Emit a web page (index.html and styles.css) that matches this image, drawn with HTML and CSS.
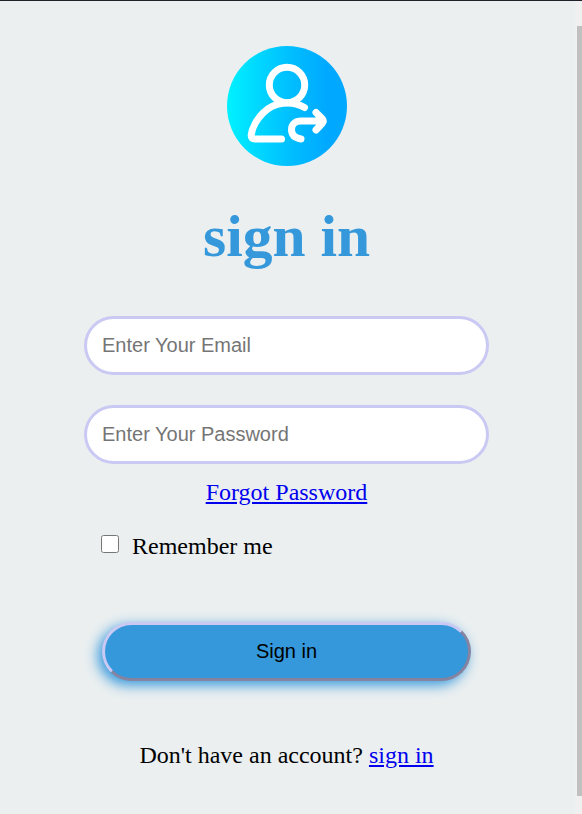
FILE: index.html
```
<!DOCTYPE html>
<html lang="en">
<head>
<meta charset="utf-8">
<title>sign in</title>
<link rel="stylesheet" href="styles.css">
</head>
<body>
<div class="window">
<main class="page">
<svg class="avatar" viewBox="0 0 120 120" aria-hidden="true">
<defs><linearGradient id="sky"><stop offset="0" stop-color="#00f2ff"/><stop offset=".25" stop-color="#00d8ff"/><stop offset=".55" stop-color="#00bdff"/><stop offset=".85" stop-color="#00a8ff"/><stop offset="1" stop-color="#00a8ff"/></linearGradient></defs>
<circle cx="60" cy="60" r="60" fill="url(#sky)"/>
<g fill="none" stroke="#fff" stroke-width="7" stroke-linecap="round" stroke-linejoin="round">
<circle cx="60" cy="39" r="17.7"/>
<path d="M77.500 61.500C64 54 47 56 36 67C30 73 25 82 24.200 89Q24 93 28 93H54.500"/>
<path d="M74 93C68 92 64.500 89 64.500 83.500C64.500 78.500 68.500 75 74 75H94M89 66.500L95.500 73Q97 75 95.500 77L89 84"/>
</g>
</svg>
<h1 class="title">sign in</h1>
<form class="form">
<input class="field" type="email" placeholder="Enter Your Email">
<input class="field" type="password" placeholder="Enter Your Password">
<a class="forgot" href="#">Forgot Password</a>
<label class="remember"><input class="check" type="checkbox">Remember me</label>
<button class="submit" type="button">Sign in</button>
</form>
<p class="account">Don't have an account? <a href="#">sign in</a></p>
</main>
<div class="track"><div class="thumb"></div></div>
</div>
</body>
</html>
```
FILE: styles.css
```
* { box-sizing: border-box; }
body {
  margin: 0;
  overflow: hidden;
  background: #ebeff0;
  font: 24px/28px "Liberation Serif", "Times New Roman", serif;
  color: #000;
}
a { color: #0000ee; }
.window {
  display: flex;
  height: 814px;
  border-top: 1px solid #202028;
}
.page {
  width: 573px;
  padding-top: 45px;
  display: flex;
  flex-direction: column;
  align-items: center;
}
.avatar { display: block; width: 120px; height: 120px; }
.title {
  margin: 35px 0 0;
  font-size: 59.5px;
  line-height: 70px;
  color: #3498db;
}
.form {
  width: 405px;
  margin-top: 45px;
  display: flex;
  flex-direction: column;
  align-items: center;
}
.field {
  width: 405px;
  height: 59px;
  margin: 0 0 30px;
  padding: 0 15px;
  border: 3px solid #c9c9f3;
  border-radius: 30px;
  background: #fff;
  font: 20px "Liberation Sans", Arial, sans-serif;
}
.field::placeholder { color: #757575; }
.forgot { margin-top: -16px; }
.remember {
  align-self: flex-start;
  margin: 26px 0 0 17px;
  display: flex;
}
.check { width: 18px; height: 18px; margin: 3px 13px 0 0; }
.submit {
  width: 369px;
  height: 59px;
  margin-top: 62px;
  padding: 0;
  border: 3px solid;
  border-color: #c9c9f3 #8583a0 #8583a0 #c9c9f3;
  border-radius: 30px;
  background: #3498db;
  box-shadow: -4px 4px 13px #3498db;
  font: 20px "Liberation Sans", Arial, sans-serif;
  color: #000;
}
.account { margin: 60px 0 0; }
.track {
  width: 7px;
  margin-left: 2px;
  padding: 25px 0 0 2px;
  background: #f1f0f1;
}
.thumb { height: 770px; background: #c0c0c0; }
```
